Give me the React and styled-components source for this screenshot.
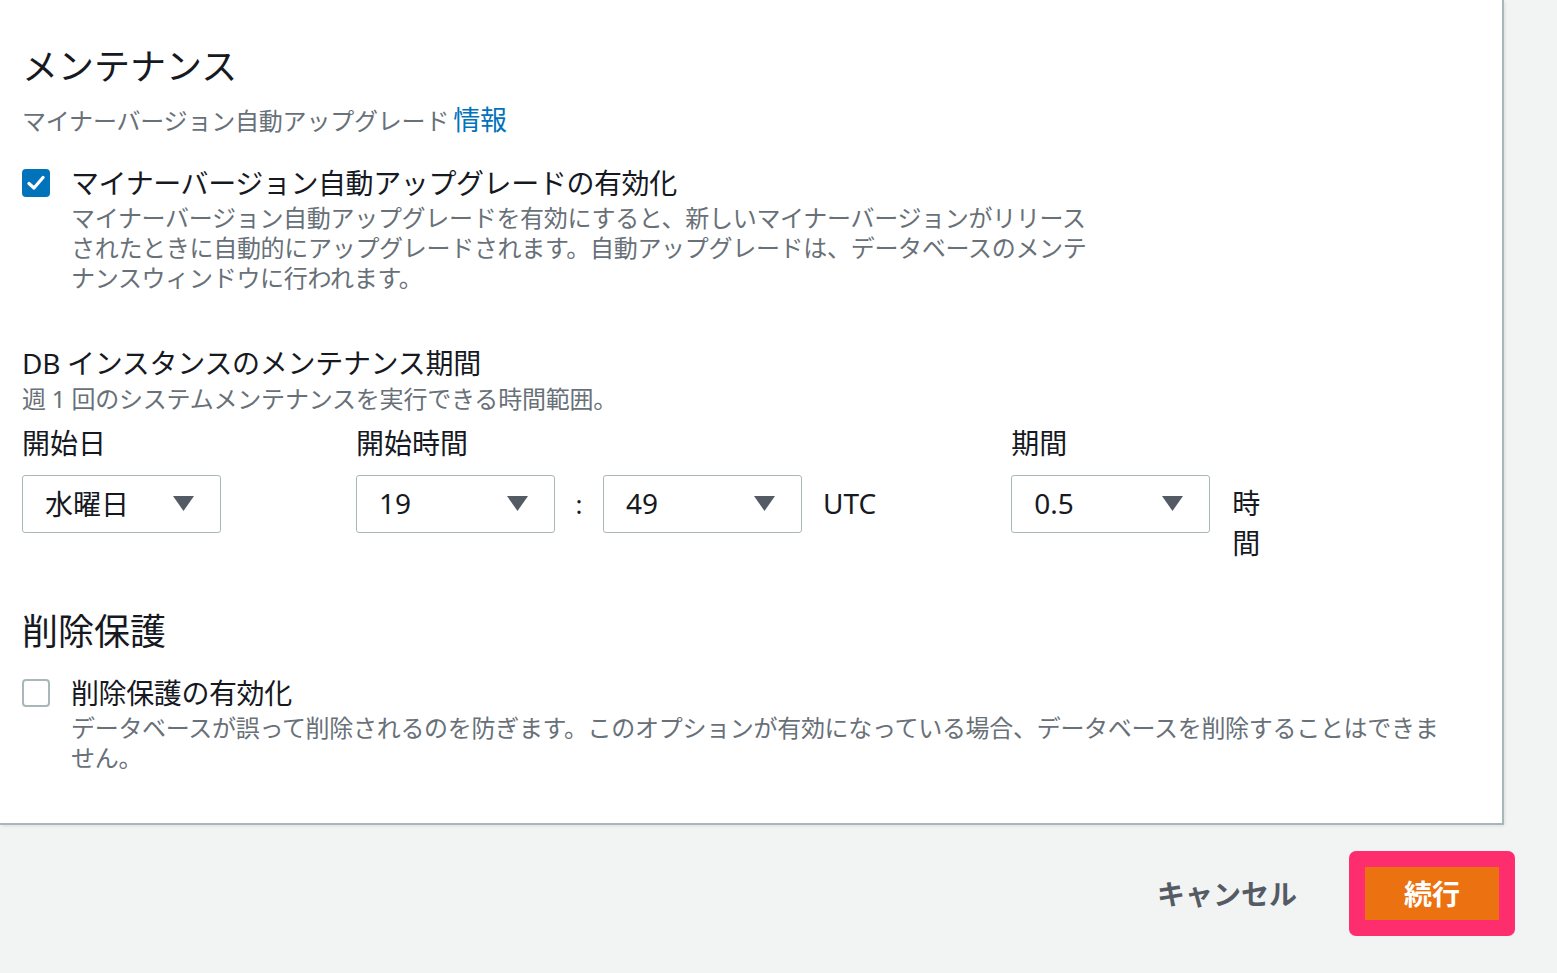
import React from "react";
import styled, { createGlobalStyle } from "styled-components";

const GlobalStyle = createGlobalStyle`
  body {
    margin: 0;
    background: #f2f3f3;
    font-family: "Noto Sans", "Noto Sans CJK JP", sans-serif;
    color: #16191f;
  }
`;

const Page = styled.div`
  width: 1557px;
  height: 973px;
  overflow: hidden;
  display: flex;
  flex-direction: column;
`;

const Panel = styled.section`
  width: 1502px;
  box-sizing: border-box;
  padding: 45px 22px 50px 22px;
  background: #fff;
  box-shadow: 1px 1px 0 1px #aab7b8, 2px 2px 4px rgba(0, 28, 36, 0.15);
`;

const SectionTitle = styled.h2`
  margin: ${(p) => p.$top || 0}px 0 0;
  font-size: 36px;
  line-height: 44px;
  font-weight: 400;
  color: #16191f;
`;

const SubText = styled.div`
  margin-top: ${(p) => p.$top || 0}px;
  font-size: 24px;
  line-height: 32px;
  color: #687078;
  letter-spacing: -0.2px;
`;

const InfoLink = styled.a`
  color: #0073bb;
  text-decoration: none;
  font-size: 27px;
  margin-left: 4px;
`;

/* checkbox rows */
const CheckRow = styled.div`
  display: flex;
  gap: 21px;
  margin-top: ${(p) => p.$top || 0}px;
`;

const Box = styled.span`
  flex: none;
  width: 28px;
  height: 28px;
  box-sizing: border-box;
  margin-top: 4px;
  border-radius: 4px;
  border: 2px solid ${(p) => (p.$checked ? "#0073bb" : "#aab7b8")};
  background: ${(p) => (p.$checked ? "#0073bb" : "#fff")};
  display: flex;
  align-items: center;
  justify-content: center;
`;

const CheckBody = styled.div`
  display: flex;
  flex-direction: column;
`;

const CheckLabel = styled.div`
  font-size: 28px;
  line-height: 36px;
  letter-spacing: -0.4px;
  color: #16191f;
`;

const CheckDesc = styled.div`
  font-size: 24px;
  line-height: 30px;
  letter-spacing: -0.3px;
  color: #687078;
  margin-top: 2px;
  max-width: ${(p) => p.$max}px;
`;

const FieldTitle = styled.div`
  margin-top: 53px;
  font-size: 28px;
  line-height: 34px;
  font-weight: 400;
  letter-spacing: -0.3px;
  color: #16191f;
`;

const Fields = styled.div`
  display: flex;
  gap: 135px;
  margin-top: 10px;
`;

const Field = styled.div`
  display: flex;
  flex-direction: column;
  gap: 14px;
`;

const FieldLabel = styled.div`
  font-size: 28px;
  line-height: 36px;
  color: #16191f;
`;

const Controls = styled.div`
  display: flex;
  align-items: flex-start;
`;

const Select = styled.div`
  width: 199px;
  height: 58px;
  box-sizing: border-box;
  border: 1px solid #aab7b8;
  border-radius: 3px;
  padding: 0 26px 2px 22px;
  display: flex;
  align-items: center;
  justify-content: space-between;
  font-size: 28px;
  color: #16191f;
  background: #fff;
`;

const Sep = styled.span`
  width: 48px;
  height: 58px;
  display: flex;
  align-items: center;
  justify-content: center;
  font-size: 26px;
`;

const Unit = styled.span`
  margin-left: ${(p) => p.$gap}px;
  font-size: 28px;
  line-height: 40px;
  padding-top: 8px;
  width: ${(p) => (p.$narrow ? "28px" : "auto")};
  color: #16191f;
`;

const Footer = styled.div`
  display: flex;
  justify-content: flex-end;
  align-items: center;
  gap: 52px;
  padding: 28px 42px 0 0;
`;

const CancelButton = styled.button`
  border: none;
  background: none;
  padding: 0 0 2px;
  font-family: inherit;
  font-size: 28px;
  font-weight: 700;
  color: #545b64;
`;

const Highlight = styled.div`
  padding: 16px;
  background: #fe2d6d;
  border-radius: 7px;
`;

const PrimaryButton = styled.button`
  width: 134px;
  height: 53px;
  border: none;
  padding: 0 0 2px;
  background: #ec7211;
  color: #fff;
  font-family: inherit;
  font-size: 28px;
  font-weight: 700;
  display: flex;
  align-items: center;
  justify-content: center;
`;

const Caret = () => (
  <svg width="21" height="15" viewBox="0 0 21 15">
    <polygon points="0,0 21,0 10.5,15" fill="#545b64" />
  </svg>
);

const Check = () => (
  <svg width="18" height="16" viewBox="0 0 18 16">
    <polyline
      points="2,8.5 7,13 16,2.5"
      fill="none"
      stroke="#fff"
      strokeWidth="3.2"
      strokeLinecap="round"
      strokeLinejoin="round"
    />
  </svg>
);

const Dropdown = ({ value }) => (
  <Select>
    <span>{value}</span>
    <Caret />
  </Select>
);

export default function App() {
  return (
    <>
      <GlobalStyle />
      <Page>
        <Panel>
          <SectionTitle>メンテナンス</SectionTitle>
          <SubText $top={15}>
            マイナーバージョン自動アップグレード
            <InfoLink href="#">情報</InfoLink>
          </SubText>

          <CheckRow $top={28}>
            <Box $checked>
              <Check />
            </Box>
            <CheckBody>
              <CheckLabel>マイナーバージョン自動アップグレードの有効化</CheckLabel>
              <CheckDesc $max={1028}>
                マイナーバージョン自動アップグレードを有効にすると、新しいマイナーバージョンがリリースされたときに自動的にアップグレードされます。自動アップグレードは、データベースのメンテナンスウィンドウに行われます。
              </CheckDesc>
            </CheckBody>
          </CheckRow>

          <FieldTitle>DB インスタンスのメンテナンス期間</FieldTitle>
          <SubText $top={3}>週 1 回のシステムメンテナンスを実行できる時間範囲。</SubText>

          <Fields>
            <Field>
              <FieldLabel>開始日</FieldLabel>
              <Controls>
                <Dropdown value="水曜日" />
              </Controls>
            </Field>
            <Field>
              <FieldLabel>開始時間</FieldLabel>
              <Controls>
                <Dropdown value="19" />
                <Sep>:</Sep>
                <Dropdown value="49" />
                <Unit $gap={21}>UTC</Unit>
              </Controls>
            </Field>
            <Field>
              <FieldLabel>期間</FieldLabel>
              <Controls>
                <Dropdown value="0.5" />
                <Unit $gap={22} $narrow>
                  時間
                </Unit>
              </Controls>
            </Field>
          </Fields>

          <SectionTitle $top={47}>削除保護</SectionTitle>
          <CheckRow $top={21}>
            <Box />
            <CheckBody>
              <CheckLabel>削除保護の有効化</CheckLabel>
              <CheckDesc $max={1378}>
                データベースが誤って削除されるのを防ぎます。このオプションが有効になっている場合、データベースを削除することはできません。
              </CheckDesc>
            </CheckBody>
          </CheckRow>
        </Panel>

        <Footer>
          <CancelButton>キャンセル</CancelButton>
          <Highlight>
            <PrimaryButton>続行</PrimaryButton>
          </Highlight>
        </Footer>
      </Page>
    </>
  );
}
